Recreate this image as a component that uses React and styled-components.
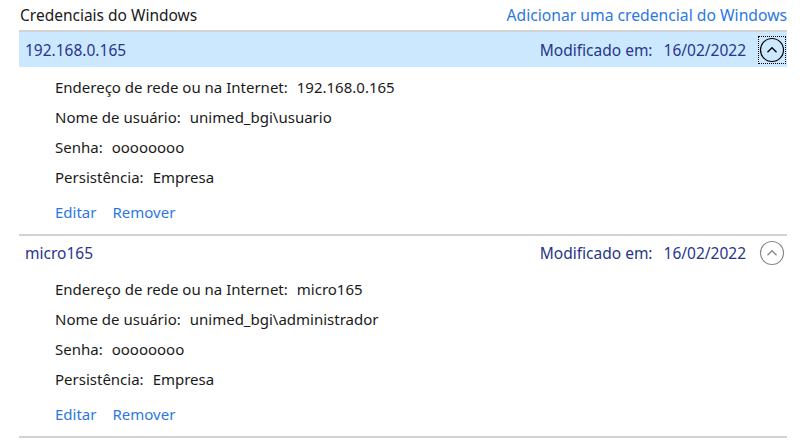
import React from "react";
import styled, { createGlobalStyle } from "styled-components";

const Global = createGlobalStyle`
  html, body { margin: 0; padding: 0; background: #fff; }
  body { font-family: "Noto Sans", "Segoe UI", sans-serif; font-size: 15px; color: #000; }
`;

const Page = styled.div`
  width: 800px;
  height: 444px;
  padding: 0 13px 0 19px;
  box-sizing: border-box;
  overflow: hidden;
`;

const TopBar = styled.div`
  display: flex;
  justify-content: space-between;
  align-items: center;
  height: 30px;
  padding-left: 1px;
  border-bottom: 2px solid #d2d2d2;
`;

const Title = styled.div`
  font-size: 15.5px;
  color: #1a1a1a;
`;

const Link = styled.a`
  color: #2b78e4;
  font-size: ${(p) => (p.$big ? "15.7px" : "15px")};
  text-decoration: none;
  cursor: pointer;
`;

const Item = styled.div`
  border-bottom: 2px solid #d2d2d2;
`;

const ItemHeader = styled.div`
  display: flex;
  align-items: center;
  height: ${(p) => (p.$selected ? "35px" : "33px")};
  padding: 0 2px 0 6px;
  background: ${(p) => (p.$selected ? "#cce8ff" : "transparent")};
  color: #27358c;
  font-size: 15.5px;
`;

const Name = styled.div`
  flex: 1;
`;

const Modified = styled.div`
  display: flex;
  gap: 11px;
  margin-right: 13px;
`;

const Toggle = styled.div`
  width: 26px;
  height: 26px;
  display: flex;
  align-items: center;
  justify-content: center;
  outline: ${(p) => (p.$focused ? "1px dotted #000" : "none")};
  outline-offset: 0;
  color: ${(p) => (p.$focused ? "#000" : "#888")};
`;

const Details = styled.div`
  padding: 5px 0 7px 36px;
  display: flex;
  flex-direction: column;
`;

const Row = styled.div`
  height: 30px;
  display: flex;
  align-items: center;
  gap: 9px;
  color: #1a1a1a;
`;

const Actions = styled.div`
  height: 30px;
  margin-top: 5px;
  display: flex;
  align-items: center;
  gap: 16px;
`;

const Chevron = () => (
  <svg width="26" height="26" viewBox="0 0 26 26">
    <circle cx="13" cy="13" r="11.5" fill="none" stroke="currentColor" strokeWidth="1.2" />
    <path d="M8.5 15.2 L13 10.7 L17.5 15.2" fill="none" stroke="currentColor" strokeWidth="1.3" />
  </svg>
);

const creds = [
  { name: "192.168.0.165", user: "unimed_bgi\\usuario", selected: true },
  { name: "micro165", user: "unimed_bgi\\administrador", selected: false },
];

export default function App() {
  return (
    <>
      <Global />
      <Page>
        <TopBar>
          <Title>Credenciais do Windows</Title>
          <Link $big>Adicionar uma credencial do Windows</Link>
        </TopBar>
        {creds.map((c) => (
          <Item key={c.name}>
            <ItemHeader $selected={c.selected}>
              <Name>{c.name}</Name>
              <Modified>
                <span>Modificado em:</span>
                <span>16/02/2022</span>
              </Modified>
              <Toggle $focused={c.selected}>
                <Chevron />
              </Toggle>
            </ItemHeader>
            <Details>
              <Row><span>Endereço de rede ou na Internet:</span><span>{c.name}</span></Row>
              <Row><span>Nome de usuário:</span><span>{c.user}</span></Row>
              <Row><span>Senha:</span><span>oooooooo</span></Row>
              <Row><span>Persistência:</span><span>Empresa</span></Row>
              <Actions>
                <Link>Editar</Link>
                <Link>Remover</Link>
              </Actions>
            </Details>
          </Item>
        ))}
      </Page>
    </>
  );
}
